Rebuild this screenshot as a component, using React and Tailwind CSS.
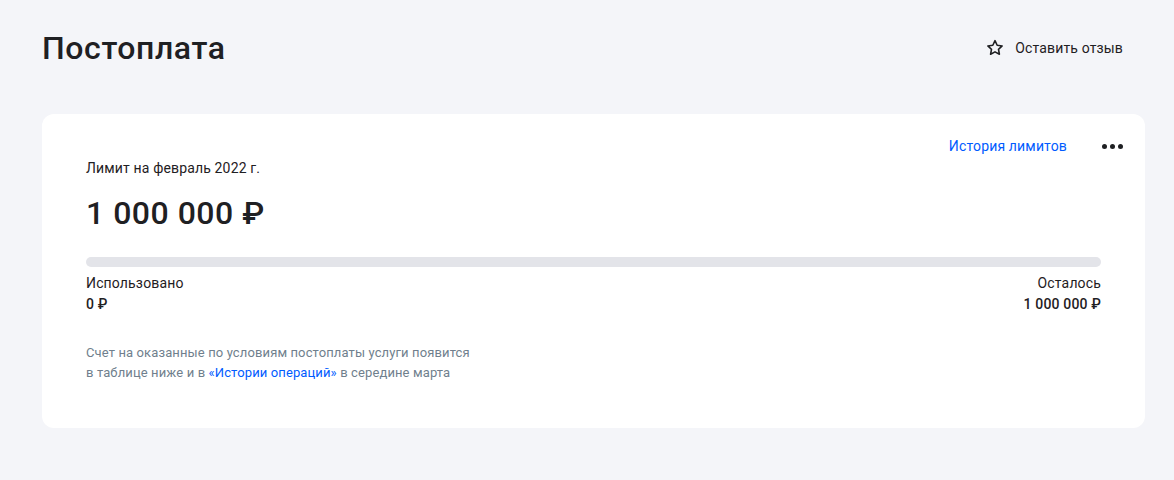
import React from "react";

function Star() {
  return (
    <svg width="20" height="20" viewBox="0 0 24 24" fill="none" stroke="#1f2023" strokeWidth="1.9" strokeLinejoin="round">
      <path d="M12 3.2l2.6 5.5 6 .8-4.4 4.1 1.1 5.9L12 16.6l-5.3 2.9 1.1-5.9L3.4 9.5l6-.8z" />
    </svg>
  );
}

export default function App() {
  return (
    <div className="min-h-screen bg-[#f4f5f9] px-[42px] pt-[28px] text-[#1f2023]" style={{ fontFamily: "Roboto, 'Noto Sans', sans-serif" }}>
      <div className="flex items-center justify-between pr-[9px]">
        <h1 className="text-[32px] leading-[40px] font-medium tracking-[0.6px]">Постоплата</h1>
        <button className="flex items-center gap-[10px] text-[14px] leading-[20px] tracking-[0.15px]">
          <Star />
          <span>Оставить отзыв</span>
        </button>
      </div>
      <div className="mt-[46px] w-[1103px] rounded-[12px] bg-white pb-[45px] pl-[44px] pr-[44px] pt-[22px]">
        <div className="-mr-[22px] flex items-center justify-end gap-[35px]">
          <a className="text-[14px] leading-[20px] tracking-[0.15px] text-[#005bff]">История лимитов</a>
          <div className="flex gap-[3px]">
            <span className="h-[5px] w-[5px] rounded-full bg-[#1f2023]"></span>
            <span className="h-[5px] w-[5px] rounded-full bg-[#1f2023]"></span>
            <span className="h-[5px] w-[5px] rounded-full bg-[#1f2023]"></span>
          </div>
        </div>
        <div className="mt-[2px] text-[14px] leading-[20px] tracking-[0.15px]">Лимит на февраль 2022 г.</div>
        <div className="mt-[15px] text-[32px] leading-[40px] font-medium tracking-[0.5px]">1 000 000 ₽</div>
        <div className="mt-[24px] h-[10px] w-full rounded-full bg-[#e3e4e9]"></div>
        <div className="mt-[6px] flex justify-between text-[14px] leading-[20px] tracking-[0.15px]">
          <div>
            <div>Использовано</div>
            <div className="mt-[1px] font-medium">0 ₽</div>
          </div>
          <div className="text-right">
            <div>Осталось</div>
            <div className="mt-[1px] font-medium">1 000 000 ₽</div>
          </div>
        </div>
        <div className="mt-[29px] text-[13px] leading-[20px] tracking-[0.12px] text-[#707f8d]">
          Счет на оказанные по условиям постоплаты услуги появится
          <br />в таблице ниже и в <span className="text-[#005bff]">«Истории операций»</span> в середине марта
        </div>
      </div>
    </div>
  );
}
